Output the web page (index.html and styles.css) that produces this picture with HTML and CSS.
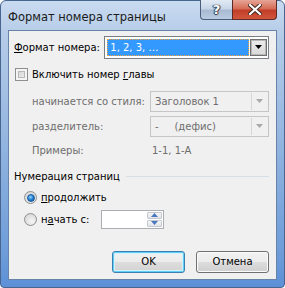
FILE: index.html
```html
<!DOCTYPE html>
<html lang="ru">
<head>
    <meta charset="UTF-8">
    <title>Формат номера страницы</title>
    <link rel="stylesheet" href="styles.css">
</head>
<body>

    <div class="window">
        <div class="titlebar">
            <span class="title">Формат номера страницы</span>
            <div class="caption-buttons">
                <div class="cap help">?</div>
                <div class="cap close">
                    <svg width="14" height="11" viewBox="0 0 14 11">
                        <path d="M2 1 L12 10 M12 1 L2 10" stroke="#3a2420" stroke-width="4" stroke-linecap="square"/>
                        <path d="M2 1 L12 10 M12 1 L2 10" stroke="#ffffff" stroke-width="2.2" stroke-linecap="square"/>
                    </svg>
                </div>
            </div>
        </div>

        <div class="client">
            <div class="row row-format">
                <span class="lbl lbl-format"><u>Ф</u>ормат номера:</span>
                <div class="combo combo-main">
                    <span class="combo-value"><span class="selected">1, 2, 3, …</span></span>
                    <span class="combo-btn">
                        <svg width="7" height="4" viewBox="0 0 7 4"><path d="M0 0 H7 L3.5 4 Z" fill="#000"/></svg>
                    </span>
                </div>
            </div>

            <div class="check-row">
                <span class="checkbox"></span>
                <span>Включить номер <u>г</u>лавы</span>
            </div>

            <div class="row sub disabled">
                <span class="lbl lbl-sub">начинается со стиля:</span>
                <div class="combo combo-off">
                    <span class="combo-value">Заголовок 1</span>
                    <span class="combo-btn">
                        <svg width="7" height="4" viewBox="0 0 7 4"><path d="M0 0 H7 L3.5 4 Z" fill="#a8a8a8"/></svg>
                    </span>
                </div>
            </div>

            <div class="row sub disabled row-sep">
                <span class="lbl lbl-sub">разделитель:</span>
                <div class="combo combo-off">
                    <span class="combo-value">-&nbsp;&nbsp;&nbsp;&nbsp;&nbsp;(дефис)</span>
                    <span class="combo-btn">
                        <svg width="7" height="4" viewBox="0 0 7 4"><path d="M0 0 H7 L3.5 4 Z" fill="#a8a8a8"/></svg>
                    </span>
                </div>
            </div>

            <div class="row sub disabled row-examples">
                <span class="lbl lbl-sub">Примеры:</span>
                <span class="example">1-1, 1-A</span>
            </div>

            <div class="group-head">
                <span>Нумерация страниц</span>
                <span class="group-line"></span>
            </div>

            <div class="radio-row first">
                <span class="radio checked"></span>
                <span><u>п</u>родолжить</span>
            </div>

            <div class="radio-row second">
                <span class="radio"></span>
                <span class="radio-lbl">н<u>а</u>чать с:</span>
                <div class="spin">
                    <span class="spin-input"></span>
                    <span class="spin-btns">
                        <span class="spin-btn">
                            <svg width="7" height="4" viewBox="0 0 7 4"><path d="M0 4 H7 L3.5 0 Z" fill="#4a78c0"/></svg>
                        </span>
                        <span class="spin-btn">
                            <svg width="7" height="4" viewBox="0 0 7 4"><path d="M0 0 H7 L3.5 4 Z" fill="#4a78c0"/></svg>
                        </span>
                    </span>
                </div>
            </div>

            <div class="buttons">
                <button class="btn default">OK</button>
                <button class="btn">Отмена</button>
            </div>
        </div>
    </div>

</body>
</html>
```

FILE: styles.css
```css
body {
    margin: 0;
    font-family: "DejaVu Sans", sans-serif;
    font-size: 10px;
    color: #000;
    background: #fff;
}
u {
    text-decoration: underline;
}
.window {
    width: 285px;
    height: 288px;
    box-sizing: border-box;
    padding: 0 7px 7px 7px;
    border-radius: 6px 6px 4px 4px;
    background: linear-gradient(to bottom, #c9dbf1 0, #b7cde8 30px, #93b5e0 140px, #6e9dd9 250px, #5b8fd6 288px);
    border: 1px solid #47658f;
    display: flex;
    flex-direction: column;
}
.titlebar {
    height: 29px;
    display: flex;
    position: relative;
}
.title {
    font-family: "DejaVu Sans", sans-serif;
    font-size: 11.5px;
    color: #1a1a1a;
    margin-top: 9px;
    margin-left: 0;
}
.caption-buttons {
    position: absolute;
    top: -1px;
    right: 0;
    display: flex;
}
.cap {
    height: 19px;
    border: 1px solid #4a5e7a;
    border-top: none;
    display: flex;
    align-items: center;
    justify-content: center;
}
.help {
    width: 31px;
    border-radius: 0 0 0 4px;
    border-right: none;
    background: linear-gradient(to bottom, #e2eaf4 0, #c8d6e8 45%, #a9bbd2 55%, #b9cbe0 100%);
    color: #fff;
    font-weight: bold;
    font-size: 13px;
    text-shadow: 0 0 1px #2d3a4d, 1px 0 1px #2d3a4d, -1px 0 1px #2d3a4d, 0 1px 1px #2d3a4d;
}
.close {
    width: 43px;
    border-radius: 0 0 4px 0;
    border-color: #5c2b25;
    background: linear-gradient(to bottom, #e7a596 0, #d66c58 45%, #c23e28 55%, #d2553c 100%);
}
.client {
    height: 251px;
    box-sizing: border-box;
    background: #f0f0f0;
    border: 1px solid #6882a8;
    padding: 5px 7px 0 5px;
}
.row {
    display: flex;
    align-items: center;
}
.row-format {
    height: 23px;
}
.lbl-format {
    width: 91px;
}
.combo {
    display: flex;
    box-sizing: border-box;
    height: 100%;
}
.combo-main {
    width: 166px;
    border: 1px solid #7a7e85;
    background: #fff;
    padding: 2px 1px 2px 2px;
}
.combo-value {
    flex: 1;
    display: flex;
    align-items: center;
}
.selected {
    display: flex;
    align-items: center;
    width: 100%;
    height: 100%;
    box-sizing: border-box;
    background: #3399ff;
    color: #fff;
    padding-left: 3px;
    outline: 1px dotted #f7a23b;
    outline-offset: -1px;
}
.combo-main .combo-btn {
    width: 15px;
    margin-left: 1px;
    border: 1px solid #707070;
    box-shadow: inset 0 0 0 1px #b8b8b8;
    background: linear-gradient(to bottom, #ececec, #d9d9d9);
    display: flex;
    align-items: center;
    justify-content: center;
}
.check-row {
    display: flex;
    align-items: center;
    height: 13px;
    margin-top: 9px;
}
.checkbox {
    width: 13px;
    height: 13px;
    box-sizing: border-box;
    margin-left: 1px;
    margin-right: 4px;
    border: 1px solid #8e8f8f;
    background: #f4f4f4;
    box-shadow: inset 0 0 0 2px #f4f4f4, inset 0 0 0 3px #b9b9b9;
    background-image: linear-gradient(135deg, #cbcbcb, #f6f6f6);
}
.sub {
    padding-left: 18px;
    height: 21px;
}
.disabled {
    color: #6d6d6d;
}
.check-row + .sub {
    margin-top: 10px;
}
.row-sep {
    margin-top: 4px;
}
.lbl-sub {
    width: 119px;
}
.combo-off {
    width: 120px;
    border: 1px solid #c5c5c5;
    background: #f0f0f0;
    padding: 1px 1px 1px 4px;
}
.combo-off .combo-btn {
    width: 15px;
    border-left: 1px solid #d6d6d6;
    display: flex;
    align-items: center;
    justify-content: center;
}
.row-examples {
    height: 14px;
    margin-top: 7px;
}
.example {
    padding-left: 1px;
}
.group-head {
    display: flex;
    align-items: center;
    height: 14px;
    margin-top: 12px;
}
.group-line {
    flex: 1;
    height: 1px;
    background: #d5dfe8;
    margin-left: 6px;
}
.radio-row {
    display: flex;
    align-items: center;
    padding-left: 10px;
}
.radio-row.first {
    height: 14px;
    margin-top: 7px;
}
.radio-row.second {
    height: 19px;
    margin-top: 5px;
}
.radio {
    width: 13px;
    height: 13px;
    box-sizing: border-box;
    border-radius: 50%;
    border: 1px solid #8e8f8f;
    background: radial-gradient(circle at 60% 65%, #f6f6f6 0, #dedede 60%, #cfcfcf 100%);
    margin-right: 4px;
    display: flex;
    align-items: center;
    justify-content: center;
}
.radio.checked::after {
    content: "";
    width: 6px;
    height: 6px;
    border-radius: 50%;
    background: radial-gradient(circle at 40% 35%, #9fd6ff 0, #2a8ad4 45%, #0c4f96 100%);
    border: 1px solid #1a5aa0;
}
.radio-lbl {
    width: 60px;
}
.spin {
    display: flex;
    width: 63px;
    height: 19px;
    box-sizing: border-box;
    border: 1px solid #abadb3;
    background: #fff;
}
.spin-input {
    flex: 1;
}
.spin-btns {
    display: flex;
    flex-direction: column;
    width: 15px;
    padding: 1px;
    gap: 1px;
}
.spin-btn {
    flex: 1;
    border: 1px solid #c4c9d0;
    border-radius: 1px;
    background: linear-gradient(to bottom, #f6f6f6, #e2e4e8);
    display: flex;
    align-items: center;
    justify-content: center;
}
.buttons {
    display: flex;
    justify-content: flex-end;
    gap: 11px;
    margin-top: 22px;
}
.btn {
    width: 73px;
    height: 22px;
    font-family: "DejaVu Sans", sans-serif;
    font-size: 10px;
    color: #000;
    border: 1px solid #707070;
    border-radius: 3px;
    background: linear-gradient(to bottom, #f2f2f2 0, #ebebeb 50%, #dddddd 51%, #cfcfcf 100%);
    box-shadow: inset 0 0 0 1px #fcfcfc;
    padding: 0;
}
.btn.default {
    border-color: #3c7fb1;
    box-shadow: inset 0 0 0 1px #5fd0f5, inset 0 0 0 2px #d6f1fb;
    background: linear-gradient(to bottom, #f2f2f2 0, #ebebeb 50%, #dddddd 51%, #d2d2d2 100%);
}
```
